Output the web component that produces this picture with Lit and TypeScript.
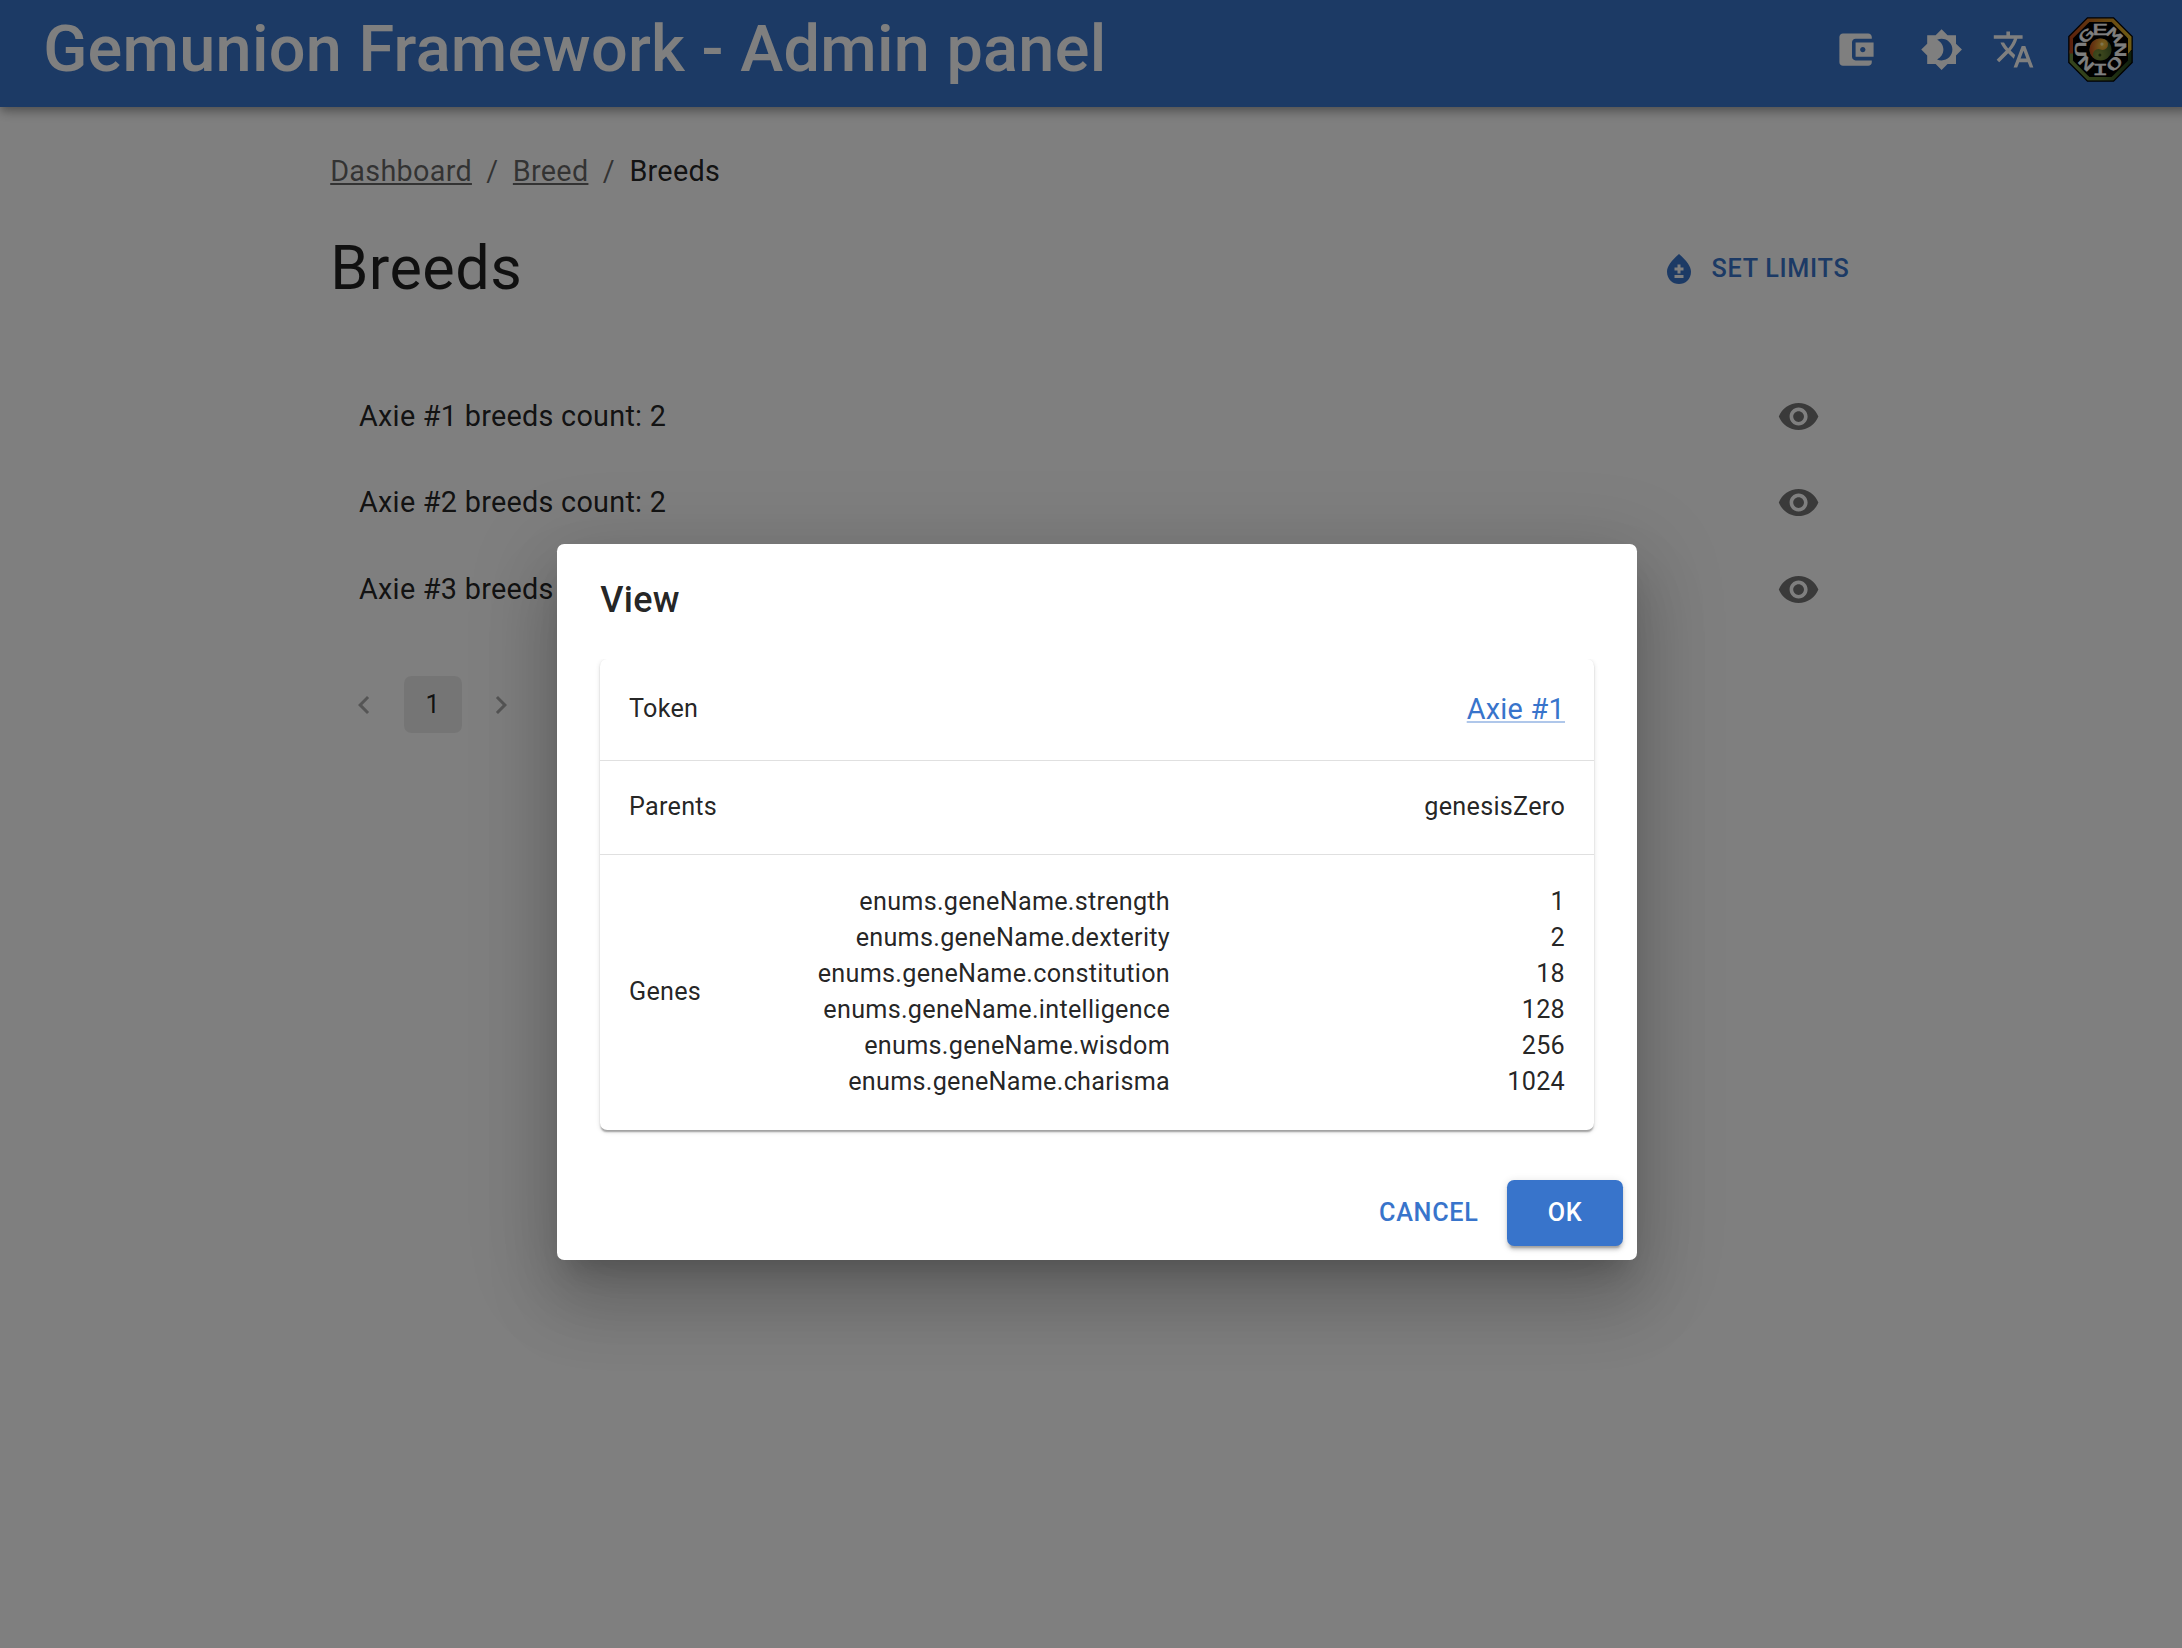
import { LitElement, html, css, svg } from "lit";
import { customElement, property } from "lit/decorators.js";

const ICONS: Record<string, string> = {
  wallet:
    "M21 18v1c0 1.1-.9 2-2 2H5c-1.11 0-2-.9-2-2V5c0-1.1.89-2 2-2h14c1.1 0 2 .9 2 2v1h-9c-1.11 0-2 .9-2 2v8c0 1.1.89 2 2 2h9zm-9-2h10V8H12v8zm4-2.5c-.83 0-1.5-.67-1.5-1.5s.67-1.5 1.5-1.5 1.5.67 1.5 1.5-.67 1.5-1.5 1.5z",
  theme:
    "M20 8.69V4h-4.69L12 .69 8.69 4H4v4.69L.69 12 4 15.31V20h4.69L12 23.31 15.31 20H20v-4.69L23.31 12 20 8.69zM12 18c-.89 0-1.74-.2-2.5-.55C11.56 16.5 13 14.42 13 12s-1.44-4.5-3.5-5.45C10.26 6.2 11.11 6 12 6c3.31 0 6 2.69 6 6s-2.69 6-6 6z",
  translate:
    "M12.87 15.07l-2.54-2.51.03-.03c1.74-1.94 2.98-4.17 3.71-6.53H17V4h-7V2H8v2H1v1.99h11.17C11.5 7.92 10.44 9.75 9 11.35 8.07 10.32 7.3 9.19 6.69 8h-2c.73 1.63 1.73 3.17 2.98 4.56l-5.09 5.02L4 19l5-5 3.11 3.11.76-2.04zM18.5 10h-2L12 22h2l1.12-3h4.75L21 22h2l-4.5-12zm-2.62 7l1.62-4.33L19.12 17h-3.24z",
  limits:
    "M12 2c-5.33 4.55-8 8.48-8 11.8 0 4.98 3.8 8.2 8 8.2s8-3.22 8-8.2c0-3.32-2.67-7.25-8-11.8zm3 16H9v-2h6v2zm0-5h-2v2h-2v-2H9v-2h2V9h2v2h2v2z",
  eye: "M12 4.5C7 4.5 2.73 7.61 1 12c1.73 4.39 6 7.5 11 7.5s9.27-3.11 11-7.5c-1.73-4.39-6-7.5-11-7.5zM12 17c-2.76 0-5-2.24-5-5s2.24-5 5-5 5 2.24 5 5-2.24 5-5 5zm0-8c-1.66 0-3 1.34-3 3s1.34 3 3 3 3-1.34 3-3-1.34-3-3-3z",
  prev: "M15.41 7.41L14 6l-6 6 6 6 1.41-1.41L10.83 12z",
  next: "M10 6L8.59 7.41 13.17 12l-4.58 4.59L10 18l6-6z",
};

@customElement("ui-icon")
export class UiIcon extends LitElement {
  @property() name = "";
  static styles = css`
    :host { display: block; flex: none; width: 43.2px; height: 43.2px; }
    svg { display: block; width: 100%; height: 100%; fill: currentColor; }
  `;
  render() {
    return html`<svg viewBox="0 0 24 24"><path d=${ICONS[this.name]}></path></svg>`;
  }
}

/* Letters around the badge: GEM reads outward, UNION reads towards the centre. */
const RING = [
  { ch: "G", at: -45, turn: 0 },
  { ch: "E", at: 0, turn: 0 },
  { ch: "M", at: 45, turn: 0 },
  { ch: "N", at: 90, turn: 180 },
  { ch: "O", at: 135, turn: 180 },
  { ch: "I", at: 180, turn: 180 },
  { ch: "N", at: 225, turn: 180 },
  { ch: "U", at: 270, turn: 180 },
];

@customElement("brand-badge")
export class BrandBadge extends LitElement {
  static styles = css`
    :host { display: block; flex: none; width: 65px; height: 65px; }
    svg { display: block; width: 100%; height: 100%; }
    .letter { font: 400 14.5px "Liberation Mono", monospace; fill: #fff; stroke: #fff; stroke-width: 0.4px; text-anchor: middle; }
  `;
  render() {
    return html`<svg viewBox="-32.5 -32.5 65 65">
      <defs>
        <linearGradient id="warm" x1="0" x2="1"><stop offset="0" stop-color="#b8431c"></stop><stop offset="0.55" stop-color="#d08a22"></stop><stop offset="1" stop-color="#e0b828"></stop></linearGradient>
        <linearGradient id="cool" x1="0" x2="1"><stop offset="0" stop-color="#6d8c3c"></stop><stop offset="0.5" stop-color="#5c7a30"></stop><stop offset="1" stop-color="#20401c"></stop></linearGradient>
        <radialGradient id="sun" cx="0.7" cy="0.25" r="0.8"><stop offset="0" stop-color="#f0c83c"></stop><stop offset="1" stop-color="#c0481a"></stop></radialGradient>
        <radialGradient id="leaf" cx="0.4" cy="0.75" r="0.7"><stop offset="0" stop-color="#84983c"></stop><stop offset="1" stop-color="#46602a"></stop></radialGradient>
      </defs>
      <path fill="#000" d="M-13.3-32.3H13.3L32.3-13.3V13.3L13.3 32.3H-13.3L-32.3 13.3V-13.3Z"></path>
      <path fill="url(#cool)" d="M-31 1L-28 -2 28 4 31 1V12.8L12.8 31H-12.8L-31 12.8Z"></path>
      <path fill="url(#warm)" d="M-31 4L-31-12.8-12.8-31H12.8L31-12.8V0L28 4Z"></path>
      <path fill="#000" stroke="#000" d="M-11.2-27H11.2L27-11.2V11.2L11.2 27H-11.2L-27 11.2V-11.2Z"></path>
      ${RING.map(
        (l) => svg`<g transform=${`rotate(${l.at}) translate(0 -20) rotate(${l.turn}) scale(1.85 1.12)`}>
          <text class="letter" y="4.6">${l.ch}</text></g>`
      )}
      <circle r="12.4" fill="#000"></circle>
      <circle r="11" fill="url(#leaf)"></circle>
      <path fill="url(#sun)" d="M0 11A11 11 0 0 1 0-11A5.5 5.5 0 0 1 0 0A5.5 5.5 0 0 0 0 11Z" transform="rotate(22)"></path>
      <circle cx="1.4" cy="-5.4" r="1.6" fill="#ffe9a0"></circle>
      <circle cx="-0.6" cy="5.6" r="1.5" fill="#2e4416"></circle>
    </svg>`;
  }
}

@customElement("app-root")
export class AppRoot extends LitElement {
  private breeds = [
    { id: 1, count: 2 },
    { id: 2, count: 2 },
    { id: 3, count: 2 },
  ];
  private genes: [string, number][] = [
    ["strength", 1],
    ["dexterity", 2],
    ["constitution", 18],
    ["intelligence", 128],
    ["wisdom", 256],
    ["charisma", 1024],
  ];

  static styles = css`
    :host {
      display: block; position: relative; width: 100%; height: 1648px; overflow: hidden;
      background: #fff; color: rgba(0, 0, 0, 0.87);
      font: 400 28.8px/43.2px Roboto, "Liberation Sans", sans-serif; letter-spacing: 0.00938em;
    }
    * { box-sizing: border-box; }
    .page { width: 2194px; }
    .bar {
      display: flex; align-items: center; height: 107px; padding: 0 61.5px 8px 43.2px;
      background: #3874cb; color: #fff;
      box-shadow: 0 3.6px 7.2px -1.8px rgba(0,0,0,.2), 0 7.2px 9px 0 rgba(0,0,0,.14), 0 1.8px 18px 0 rgba(0,0,0,.12);
    }
    .brand { flex: 1; margin: 0; font-size: 64.8px; line-height: 97px; font-weight: 500; letter-spacing: 0.27px; }
    .tools { display: flex; align-items: center; }
    .tools .theme { margin-left: 43.2px; }
    .tools .lang { margin-left: 28.8px; }
    .tools brand-badge { margin-left: 32px; }
    main { width: 1533.6px; margin: 0 auto; padding-top: 42.6px; }
    .crumbs { display: flex; }
    .crumbs a { color: rgba(0,0,0,.6); text-decoration: underline; }
    .crumbs .sep { margin: 0 14.4px; color: rgba(0,0,0,.6); }
    .head { display: flex; align-items: center; justify-content: space-between; margin-top: 38.3px; height: 75.6px; }
    h4 { margin: 0; font-weight: 400; font-size: 61.2px; line-height: 75.6px; letter-spacing: 0.00735em; }
    .btn {
      display: flex; align-items: center; justify-content: center; height: 65.7px; border-radius: 7.2px;
      padding: 0 14.4px; font-size: 25.2px; font-weight: 500; letter-spacing: 0.02857em; color: #3874cb;
    }
    .btn ui-icon { width: 36px; height: 36px; margin-right: 14.4px; }
    .list { margin-top: 66.6px; }
    .row { display: flex; align-items: center; justify-content: space-between; height: 86.4px; padding: 0 43.2px 0 28.8px; }
    .row ui-icon { color: rgba(0,0,0,.54); }
    .pages { display: flex; gap: 10.8px; margin-top: 43.4px; padding-left: 5.4px; }
    .page-item { display: flex; align-items: center; justify-content: center; width: 57.6px; height: 57.6px; border-radius: 7.2px; font-size: 25.2px; letter-spacing: 0.01071em; }
    .page-item.on { background: rgba(0,0,0,.08); }
    .page-item.off { opacity: .38; }
    .page-item ui-icon { width: 36px; height: 36px; }
    .backdrop { position: absolute; top: 0; left: 0; width: 2194px; height: 1804px; display: flex; align-items: center; justify-content: center; background: rgba(0,0,0,.5); }
    .dialog {
      width: 1080px; height: 716px; background: #fff; border-radius: 7.2px;
      box-shadow: 0 19.8px 27px -12.6px rgba(0,0,0,.2), 0 43.2px 68.4px 5.4px rgba(0,0,0,.14), 0 16.2px 82.8px 14.4px rgba(0,0,0,.12);
    }
    h2 { margin: 0; padding: 27.8px 43.2px 29.4px; font-size: 36px; line-height: 57.6px; font-weight: 500; letter-spacing: 0.0075em; }
    .content { padding: 0 43.2px 36.2px; overflow: hidden; }
    .table {
      border-radius: 7.2px; font-size: 25.2px; line-height: 36.04px; letter-spacing: 0.01071em;
      box-shadow: 0 3.6px 1.8px -1.8px rgba(0,0,0,.2), 0 1.8px 1.8px 0 rgba(0,0,0,.14), 0 1.8px 5.4px 0 rgba(0,0,0,.12);
    }
    .tr { display: flex; align-items: center; justify-content: space-between; padding: 28.8px; border-bottom: 1px solid #e0e0e0; }
    .tr:last-child { border-bottom: 0; padding-bottom: 29.6px; }
    .link { font-size: 28.8px; line-height: 43.2px; letter-spacing: 0.00938em; color: #3874cb; text-decoration: underline; text-decoration-color: rgba(56,116,203,.4); }
    .genes { display: grid; grid-template-columns: auto 395px; line-height: 36px; text-align: right; }
    .actions { display: flex; justify-content: flex-end; gap: 14.4px; padding: 14.4px; }
    .btn.main {
      min-width: 115.2px; background: #3874cb; color: #fff;
      box-shadow: 0 5.4px 1.8px -3.6px rgba(0,0,0,.2), 0 3.6px 3.6px 0 rgba(0,0,0,.14), 0 1.8px 9px 0 rgba(0,0,0,.12);
    }
  `;

  render() {
    return html`
      <div class="page">
        <header class="bar">
          <h1 class="brand">Gemunion Framework - Admin panel</h1>
          <div class="tools">
            <ui-icon name="wallet"></ui-icon>
            <ui-icon class="theme" name="theme"></ui-icon>
            <ui-icon class="lang" name="translate"></ui-icon>
            <brand-badge></brand-badge>
          </div>
        </header>
        <main>
          <nav class="crumbs">
            <a>Dashboard</a><span class="sep">/</span><a>Breed</a><span class="sep">/</span><span>Breeds</span>
          </nav>
          <div class="head">
            <h4>Breeds</h4>
            <div class="btn"><ui-icon name="limits"></ui-icon>SET LIMITS</div>
          </div>
          <div class="list">
            ${this.breeds.map(
              (b) => html`<div class="row"><span>Axie #${b.id} breeds count: ${b.count}</span><ui-icon name="eye"></ui-icon></div>`
            )}
          </div>
          <div class="pages">
            <div class="page-item off"><ui-icon name="prev"></ui-icon></div>
            <div class="page-item on">1</div>
            <div class="page-item off"><ui-icon name="next"></ui-icon></div>
          </div>
        </main>
      </div>
      <div class="backdrop">
        <section class="dialog">
          <h2>View</h2>
          <div class="content">
            <div class="table">
              <div class="tr"><span>Token</span><a class="link">Axie #1</a></div>
              <div class="tr"><span>Parents</span><span>genesisZero</span></div>
              <div class="tr">
                <span>Genes</span>
                <div class="genes">
                  ${this.genes.map(([name, value]) => html`<span>enums.geneName.${name}</span><span>${value}</span>`)}
                </div>
              </div>
            </div>
          </div>
          <div class="actions">
            <div class="btn">CANCEL</div>
            <div class="btn main">OK</div>
          </div>
        </section>
      </div>
    `;
  }
}
